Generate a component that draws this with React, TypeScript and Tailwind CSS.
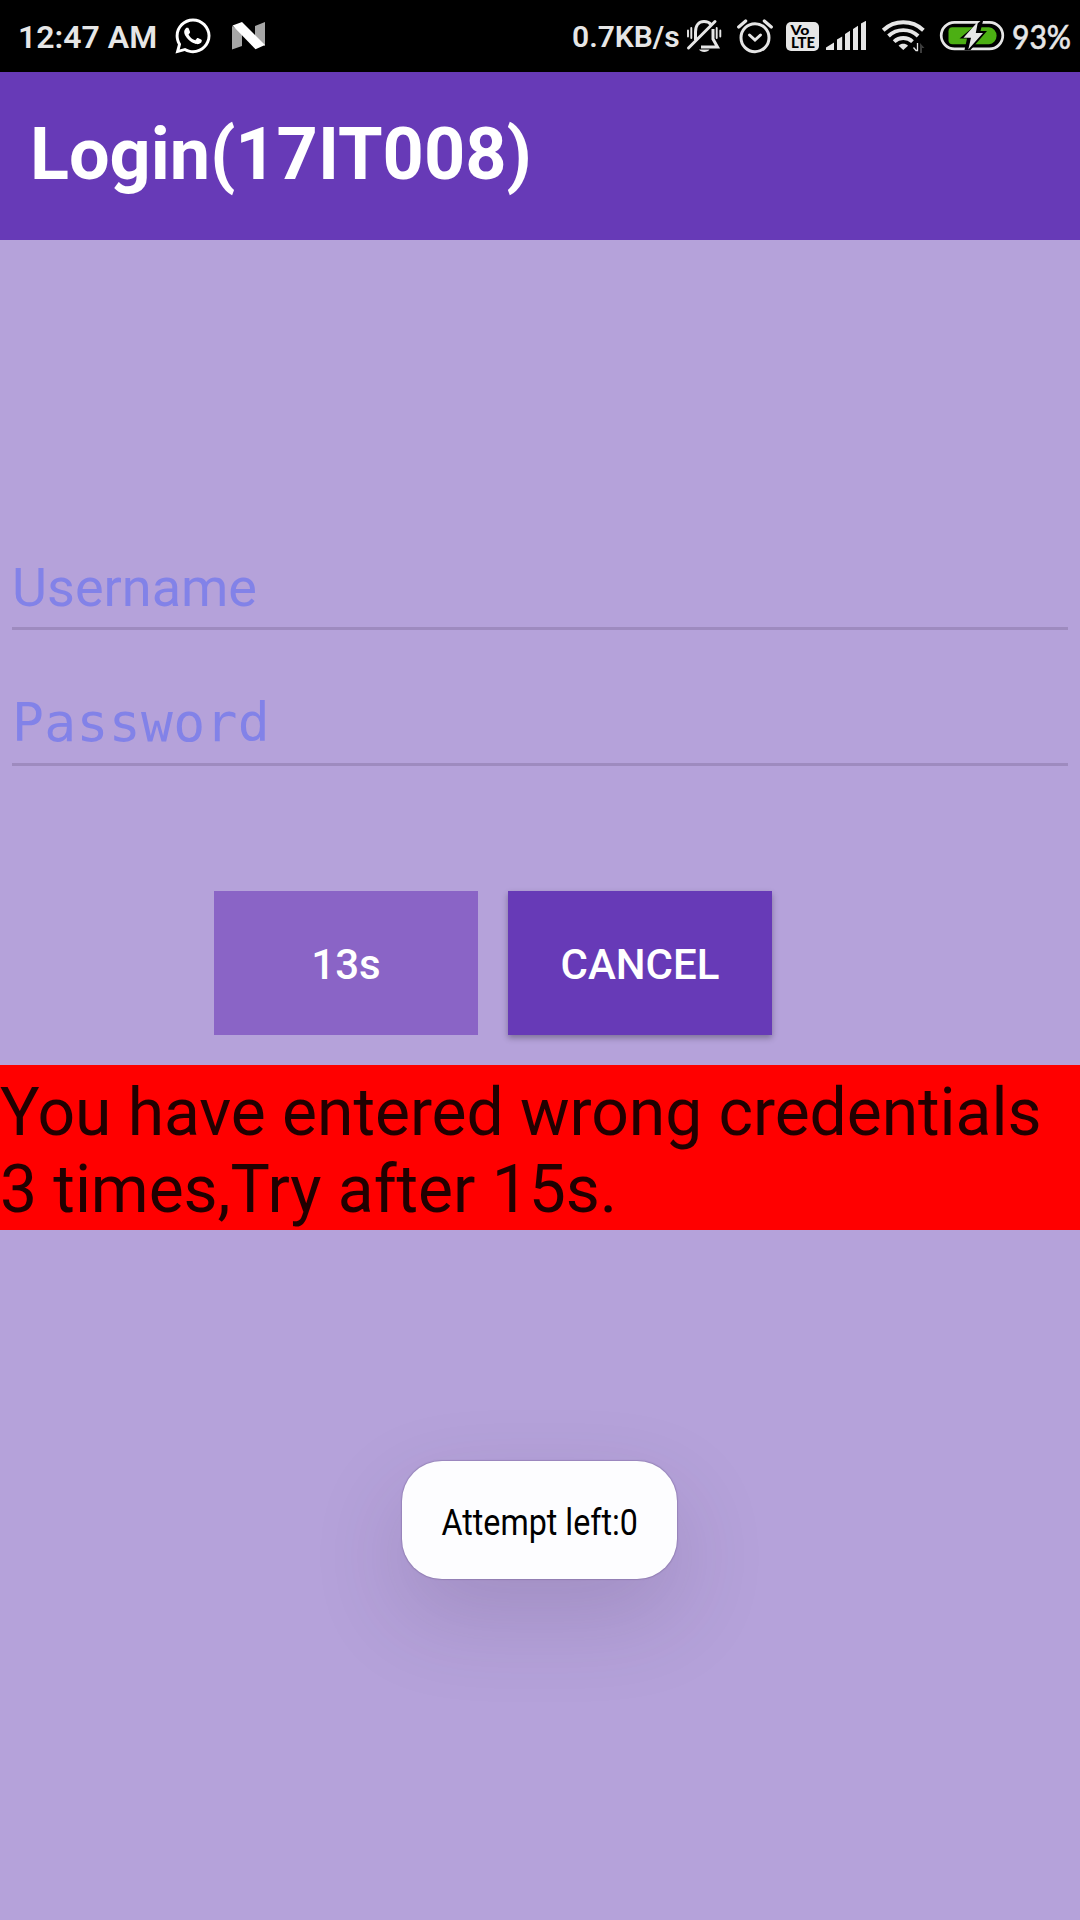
import { FaWhatsapp } from "react-icons/fa";

function NougatIcon() {
  return (
    <svg width="34" height="28" viewBox="0 0 34 28">
      <path d="M0 4 L10 10 V24 L0 27.5Z M33 0 L23 4 V18 L33 24Z" fill="#a6a6a6" />
      <path d="M0.5 3.5 L10 0 L33 23 L23.5 27.3Z" fill="#fff" />
    </svg>
  );
}

function MutedBellIcon() {
  return (
    <svg width="36" height="36" viewBox="686 18 36 36" fill="none" stroke="#e6e6e6">
      <path d="M688 30.500v6M691.300 28v10M716.700 28v10M720.300 30.500v6" strokeWidth="1.900" strokeLinecap="round" />
      <path d="M695.500 40V32C695.500 25 699 21.500 704 21.500C707 21.500 709.500 22.500 711 24.500M713 29v10l4.500 8H701" strokeWidth="3" />
      <path d="M688.500 48L715 21.500" strokeWidth="3" strokeLinecap="round" />
      <path d="M699 49.500h10.500c-1.500 3.300-9 3.300-10.500 0z" fill="#e6e6e6" stroke="none" />
    </svg>
  );
}

function AlarmIcon() {
  return (
    <svg width="38" height="38" viewBox="736 17 38 38" fill="none" stroke="#e6e6e6" strokeWidth="3" strokeLinecap="round">
      <circle cx="755" cy="37.700" r="14" />
      <path d="M749.500 35l5.500 5l5.500-5" />
      <path d="M738.700 27l7-6M764.300 21l7 6" strokeWidth="3.200" />
    </svg>
  );
}

function VolteBadge() {
  return (
    <svg width="33" height="29" viewBox="0 0 33 29" fontFamily="Lato, sans-serif" fontWeight="900">
      <rect width="33" height="29" rx="5" fill="#e6e6e6" />
      <text x="4.500" y="12.500" fontSize="13.500" textLength="19" lengthAdjust="spacingAndGlyphs">Vo</text>
      <text x="5" y="25.800" fontSize="14.500" textLength="24" lengthAdjust="spacingAndGlyphs">LTE</text>
    </svg>
  );
}

function SignalIcon() {
  return (
    <svg width="40" height="30" viewBox="826 21 40 30" fill="#e6e6e6">
      <path d="M826 50v-2.500l8-5V50zM837 50V39.500l5.200-3V50zM845 50V34l5-3.200V50zM853 50V29l5-3.200V50zM861 50V23.500l5-2.700V50z" />
    </svg>
  );
}

function WifiIcon() {
  return (
    <svg width="44" height="34" viewBox="881 20 44 34" fill="none" stroke="#e6e6e6" strokeWidth="3.900">
      <path d="M883.200 31.200A29.500 29.500 0 0 1 923.400 31.200" />
      <path d="M888.500 37A21.500 21.500 0 0 1 918.100 37" />
      <path d="M894.100 42.600A13.500 13.500 0 0 1 912.500 42.600" />
      <path d="M903.300 51l-4.700-4.300c2.500-2.600 6.900-2.600 9.400 0z" fill="#e6e6e6" stroke="none" />
      <path d="M913.500 48.500l2.500 3h1.500V44" strokeWidth="1.300" />
      <path d="M920 54V44l4.500 5h-2.500v5z" fill="#3c3c3c" stroke="none" />
    </svg>
  );
}

function BatteryIcon() {
  return (
    <svg width="66" height="32" viewBox="939 20 66 32">
      <rect x="941.200" y="22.300" width="61.600" height="26.600" rx="13.300" fill="none" stroke="#e6e6e6" strokeWidth="2.700" />
      <path d="M952.500 27.300H989a8.500 8.500 0 0 1 0 16.900H952.500a4 4 0 0 1-4-4V31.300a4 4 0 0 1 4-4z" fill="#4caf13" />
      <path d="M980.500 21L959.500 38.500H967L964.500 50H970.500L987 31H980.500L983 21Z" fill="#000" />
      <path d="M978 21.500L963.500 37.800H971L968.300 49.500L983 33H975.800Z" fill="#e6e6e6" />
    </svg>
  );
}

function StatusBar() {
  return (
    <div className="flex h-[72px] w-full items-center bg-black text-[#e6e6e6]">
      <span className="ml-[18px] w-[140px] pt-0.5 text-[32px] leading-9 font-semibold whitespace-nowrap">12:47 AM</span>
      <FaWhatsapp className="ml-[17px] h-[41px] w-9 pb-px text-white" />
      <div className="ml-[21px] pb-px"><NougatIcon /></div>
      <div className="ml-auto flex items-center">
        <span className="w-[108px] pt-0.5 text-[30px] leading-9 font-semibold whitespace-nowrap">0.7KB/s</span>
        <div className="ml-[6px]"><MutedBellIcon /></div>
        <div className="ml-[14px]"><AlarmIcon /></div>
        <div className="ml-[12px]"><VolteBadge /></div>
        <div className="ml-[7px]"><SignalIcon /></div>
        <div className="ml-[15px]"><WifiIcon /></div>
        <div className="ml-[14px]"><BatteryIcon /></div>
        <span className="ml-[7px] w-[68px] origin-left scale-x-[0.910] font-[Lato] text-[33px] leading-9 font-medium whitespace-nowrap [-webkit-text-stroke:0.5px_#e6e6e6]">93%</span>
      </div>
    </div>
  );
}

export default function App() {
  return (
    <div className="flex h-[1920px] w-[1080px] flex-col overflow-hidden bg-[#b5a2da] font-[Roboto,sans-serif]">
      <StatusBar />
      <header className="flex h-[168px] items-center bg-[#673ab7] pb-[2px] pl-[30px]">
        <h1 className="text-[72px] leading-[84px] font-bold whitespace-nowrap text-white">Login(17IT008)</h1>
      </header>
      <main className="flex flex-col">
        <div className="mx-3 mt-[316px] h-[74px] border-b-[3px] border-[#9e8bbf] text-[54px] leading-[64px] text-[#8282e8]">
          Username
        </div>
        <div className="mx-3 mt-[61px] h-[75px] border-b-[3px] border-[#9e8bbf] font-['DejaVu_Sans_Mono',monospace] text-[53px] leading-[64px] tracking-[0.350px] text-[#8282e8]">
          Password
        </div>
        <div className="mt-[125px] ml-[214px] flex gap-[30px] text-[42px] leading-[50px] font-medium text-white">
          <button className="h-36 w-[264px] bg-[#8a64c6] pt-[3px]">13s</button>
          <button className="h-36 w-[264px] bg-[#673ab7] pt-[3px] shadow-[0_3px_6px_rgba(0,0,0,0.3)]">CANCEL</button>
        </div>
        <p className="mt-[29.500px] h-[165.500px] bg-[#ff0000] pt-[9.500px] text-[66px] leading-[77px] tracking-[-0.060px] text-[#210000]">
          You have entered wrong credentials
          <br />3 times,Try after 15s.
        </p>
      </main>
      <div className="mt-[231px] ml-[402px] flex h-[118px] w-[275px] items-center justify-center rounded-[40px] bg-[#fdfdff] pt-[5px] text-[36px] leading-[42px] text-black shadow-[0_0_1px_1px_rgba(80,60,110,0.250),0_36px_90px_rgba(60,40,80,0.170)]">
        <span className="scale-x-[0.895] whitespace-nowrap">Attempt left:0</span>
      </div>
    </div>
  );
}
